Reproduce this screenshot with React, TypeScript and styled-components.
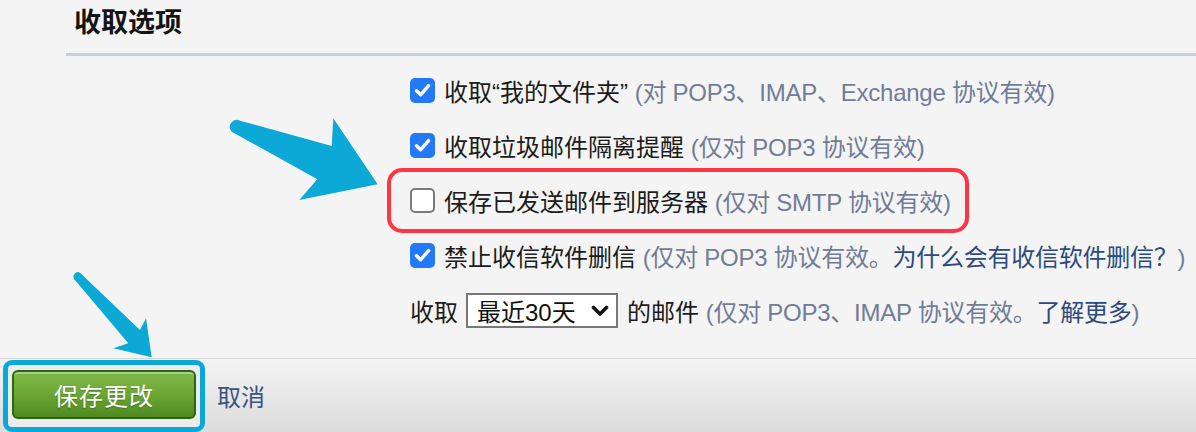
import React from "react";
import styled, { createGlobalStyle, css } from "styled-components";

const GlobalStyle = createGlobalStyle`
  html, body {
    margin: 0;
    padding: 0;
    background: #f4f4f4;
  }
  body {
    font-family: "Liberation Sans", "Noto Sans CJK SC", sans-serif;
    color: #1b1b1b;
  }
`;

const Page = styled.div`
  position: relative;
  width: 1196px;
  height: 432px;
  overflow: hidden;
  display: flex;
  flex-direction: column;
  background: #f4f4f4;
`;

const Header = styled.header`
  padding: 5px 0 0 74px;
`;

const Title = styled.h2`
  margin: 0;
  font-size: 27px;
  line-height: 36px;
  font-weight: 700;
  color: #141414;
`;

const Divider = styled.div`
  margin: 12px 0 0 66px;
  height: 3px;
  background: #c9d0dc;
`;

const Options = styled.div`
  flex: 1;
  display: flex;
  flex-direction: column;
  align-items: flex-start;
  padding: 7px 0 0 410px;
`;

const Row = styled.label<{ $highlight?: boolean }>`
  display: flex;
  align-items: center;
  height: 55px;
  font-size: 24px;
  white-space: nowrap;
  color: #1b1b1b;
  ${(p) =>
    p.$highlight &&
    css`
      margin-left: -18px;
      padding: 0 13px 0 18px;
      border-radius: 10px;
      outline: 4px solid #ff3445;
      outline-offset: 1px;
    `}
`;

const Box = styled.span<{ $checked: boolean }>`
  flex: none;
  width: 25px;
  height: 25px;
  box-sizing: border-box;
  margin-right: 9px;
  border-radius: 5px;
  display: flex;
  align-items: center;
  justify-content: center;
  background: ${(p) => (p.$checked ? "#2379f7" : "#ffffff")};
  border: ${(p) => (p.$checked ? "none" : "2px solid #7a7a7a")};
`;

const Note = styled.span`
  color: #717c97;
  letter-spacing: -0.25px;
`;

const NoteLink = styled.a`
  color: #2c4a7e;
  text-decoration: none;
`;

const Select = styled.div`
  display: flex;
  align-items: center;
  justify-content: space-between;
  width: 152px;
  height: 35px;
  box-sizing: border-box;
  margin: 0 9px 0 8px;
  padding: 0 7px 0 9px;
  border: 2px solid #777777;
  background: #ffffff;
  color: #111111;
  font-size: 24px;
`;

const ActionBar = styled.footer`
  height: 73px;
  border-top: 1px solid #d8d8d8;
  background: linear-gradient(#f3f3f3, #dcdcdc);
  display: flex;
  align-items: center;
  gap: 12px;
  padding-left: 3px;
`;

const Spotlight = styled.div`
  border: 5px solid #0aa8d8;
  border-radius: 9px;
  padding: 5px 4px 8px 4px;
  background: #ececec;
`;

const SaveButton = styled.button`
  display: block;
  width: 184px;
  height: 49px;
  box-sizing: border-box;
  border: 2px solid #2d6612;
  border-radius: 6px;
  background: linear-gradient(#80b848 0%, #6ea936 45%, #4e8a21 100%);
  box-shadow: inset 0 2px 0 rgba(255, 255, 255, 0.35);
  color: #ffffff;
  font-family: inherit;
  font-size: 24px;
  letter-spacing: 1px;
  text-shadow: 0 1px 1px rgba(0, 0, 0, 0.25);
  cursor: pointer;
`;

const Cancel = styled.a`
  font-size: 24px;
  color: #3a5584;
  text-decoration: none;
`;

const Annotations = styled.svg`
  position: absolute;
  top: 0;
  left: 0;
  pointer-events: none;
`;

const Check = () => (
  <svg width="25" height="25" viewBox="0 0 25 25">
    <path
      d="M6.5 12.8 L10.6 16.8 L18.6 7.6"
      fill="none"
      stroke="#ffffff"
      strokeWidth="3.4"
      strokeLinecap="round"
      strokeLinejoin="round"
    />
  </svg>
);

const Checkbox = ({ checked }: { checked: boolean }) => (
  <Box $checked={checked}>{checked && <Check />}</Box>
);

const Chevron = () => (
  <svg width="18" height="12" viewBox="0 0 18 12">
    <path
      d="M2.5 2.5 L9 9 L15.5 2.5"
      fill="none"
      stroke="#111111"
      strokeWidth="3.6"
      strokeLinecap="round"
      strokeLinejoin="round"
    />
  </svg>
);

export default function App() {
  return (
    <Page>
      <GlobalStyle />
      <Header>
        <Title>收取选项</Title>
      </Header>
      <Divider />
      <Options>
        <Row>
          <Checkbox checked />
          收取“我的文件夹”&nbsp;<Note>(对 POP3、IMAP、Exchange 协议有效)</Note>
        </Row>
        <Row>
          <Checkbox checked />
          收取垃圾邮件隔离提醒&nbsp;<Note>(仅对 POP3 协议有效)</Note>
        </Row>
        <Row $highlight>
          <Checkbox checked={false} />
          保存已发送邮件到服务器&nbsp;<Note>(仅对 SMTP 协议有效)</Note>
        </Row>
        <Row>
          <Checkbox checked />
          禁止收信软件删信&nbsp;
          <Note>
            (仅对 POP3 协议有效。<NoteLink>为什么会有收信软件删信？</NoteLink>)
          </Note>
        </Row>
        <Row as="div">
          收取
          <Select>
            <span>最近30天</span>
            <Chevron />
          </Select>
          的邮件&nbsp;
          <Note>
            (仅对 POP3、IMAP 协议有效。<NoteLink>了解更多</NoteLink>)
          </Note>
        </Row>
      </Options>
      <ActionBar>
        <Spotlight>
          <SaveButton>保存更改</SaveButton>
        </Spotlight>
        <Cancel>取消</Cancel>
      </ActionBar>
      <Annotations width="1196" height="432" viewBox="0 0 1196 432">
        <path
          d="M240 120.7 L331.7 146 L333.3 118.3 L377.7 184.3 L299.3 200 L317.3 179.3 L231.7 131.7 A7 7 0 0 1 240 120.7 Z"
          fill="#0ca9d6"
        />
        <path
          d="M80 272.7 L140 330 L146 318.3 L151.7 357.3 L113.3 348.3 L128.3 343.3 L74.3 279.3 A4.5 4.5 0 0 1 80 272.7 Z"
          fill="#0ca9d6"
        />
      </Annotations>
    </Page>
  );
}
